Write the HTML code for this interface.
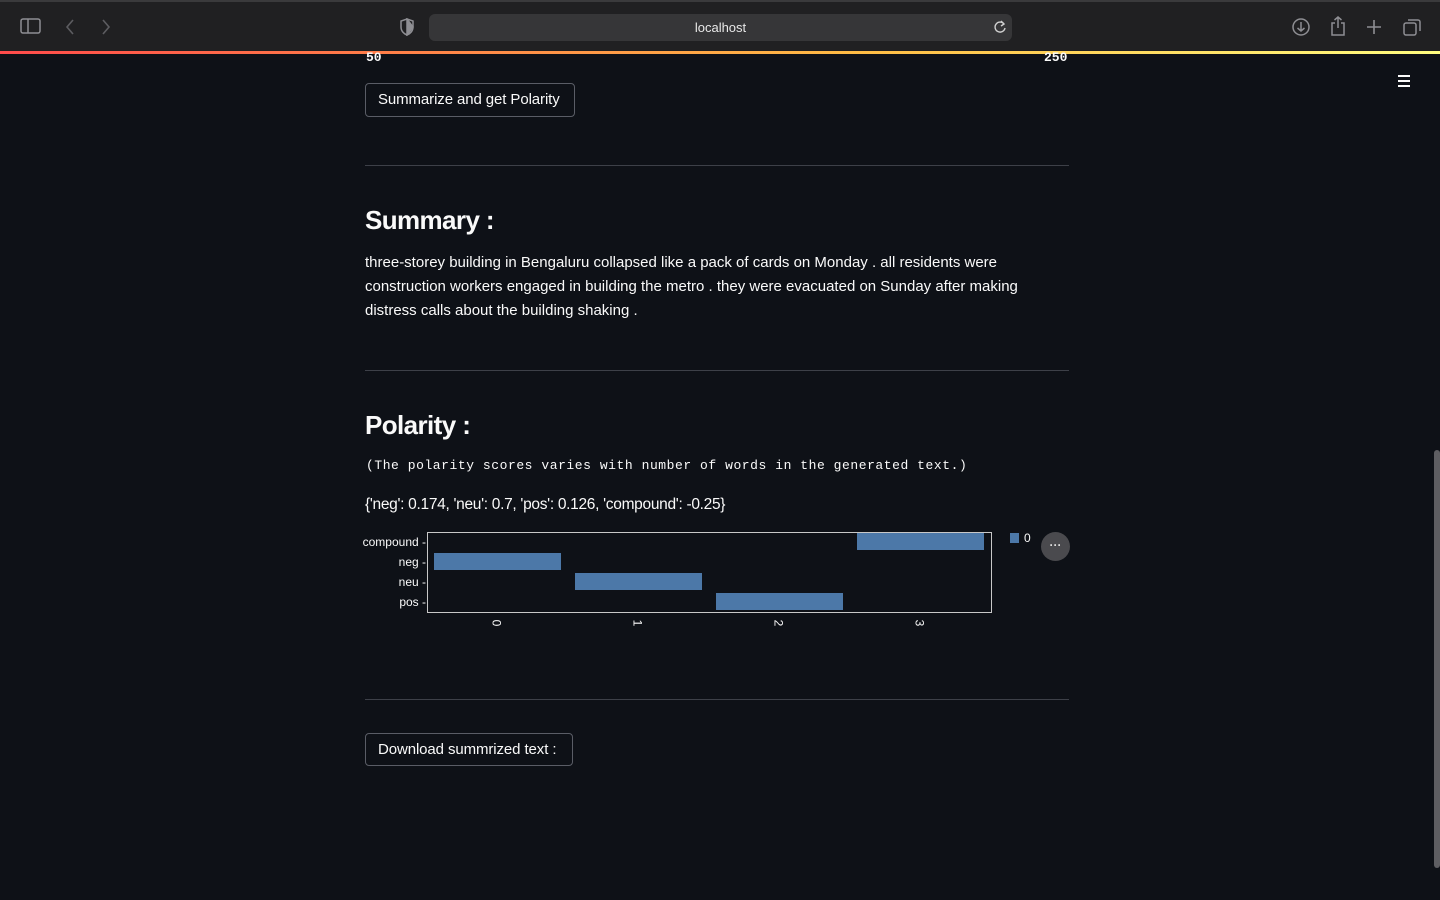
<!DOCTYPE html>
<html><head><meta charset="utf-8"><style>
*{margin:0;padding:0;box-sizing:border-box}
body{width:1440px;height:900px;background:#0e1117;color:#fafafa;font-family:"Liberation Sans",sans-serif;position:relative;overflow:hidden}
.tb{position:absolute;left:0;top:0;width:1440px;height:51px;background:#202022;border-top:2px solid #3a3a3c}
.grad{position:absolute;left:0;top:51px;width:1440px;height:3px;background:linear-gradient(90deg,#ff4b4b,#ffbd45 60%,#fffd80)}
.url{position:absolute;left:429px;top:12px;width:583px;height:27px;background:#363638;border-radius:6px;font-size:13px;text-align:center;line-height:27px;color:#e8e8e8}
.abs{position:absolute}
.btn{position:absolute;border:1px solid #5a5d66;border-radius:4px;font-size:15px;letter-spacing:-0.1px;line-height:32px;padding:0 12px;color:#fafafa;background:#0e1117}
hr{position:absolute;left:365px;width:704px;border:none;border-top:1px solid #3d4048}
h2{position:absolute;left:365px;font-size:26px;font-weight:bold;letter-spacing:-0.6px}
.p{position:absolute;left:365px;font-size:15px;letter-spacing:0px;line-height:24px;width:720px;white-space:nowrap}
.mono{position:absolute;left:366px;font-family:"Liberation Mono",monospace;font-size:13px;letter-spacing:0.55px}
.lab{position:absolute;font-size:12px;text-align:right;width:66px}
.bar{position:absolute;background:#4c78a8;height:17px}
</style></head><body>
<div class="tb">
<svg class="abs" style="left:20px;top:15px" width="22" height="18" viewBox="0 0 22 18" fill="none" stroke="#8e8e93" stroke-width="1.5"><rect x="1" y="2" width="19" height="14" rx="2"/><line x1="8" y1="2" x2="8" y2="16"/></svg>
<svg class="abs" style="left:64px;top:16px" width="12" height="18" fill="none" stroke="#5c5c60" stroke-width="1.6"><path d="M9 2 L3 9 L9 16"/></svg>
<svg class="abs" style="left:100px;top:16px" width="12" height="18" fill="none" stroke="#5c5c60" stroke-width="1.6"><path d="M3 2 L9 9 L3 16"/></svg>
<svg class="abs" style="left:399px;top:16px" width="16" height="18" fill="none" stroke="#8e8e93" stroke-width="1.5"><path d="M8 1 L14 3 V9 C14 13 11 16 8 17 C5 16 2 13 2 9 V3 Z"/><path d="M8 1 V17 L14 9 Z" fill="#8e8e93"/></svg>
<div class="url">localhost</div>
<svg class="abs" style="left:992px;top:17px" width="16" height="16" fill="none" stroke="#d0d0d0" stroke-width="1.4"><path d="M12 5 A5 5 0 1 0 13 9"/><path d="M9 2 L12 5 L9 7"/></svg>
<svg class="abs" style="left:1291px;top:15px" width="20" height="20" fill="none" stroke="#8e8e93" stroke-width="1.5"><circle cx="10" cy="10" r="8"/><path d="M10 5 V14 M6.5 11 L10 14 L13.5 11"/></svg>
<svg class="abs" style="left:1329px;top:13px" width="18" height="22" fill="none" stroke="#8e8e93" stroke-width="1.5"><path d="M6 8 H3 V20 H15 V8 H12 M9 2 V13 M5.5 5 L9 2 L12.5 5"/></svg>
<svg class="abs" style="left:1366px;top:17px" width="16" height="16" stroke="#8e8e93" stroke-width="1.6"><path d="M8 1 V15 M1 8 H15"/></svg>
<svg class="abs" style="left:1403px;top:16px" width="19" height="19" fill="none" stroke="#8e8e93" stroke-width="1.5"><rect x="1" y="5" width="12" height="12" rx="2"/><path d="M5 2 H15 A2 2 0 0 1 17 4 V13"/></svg>
</div>
<div class="grad"></div>
<div class="abs" style="left:366px;top:50px;font-family:'Liberation Mono',monospace;font-size:13px;font-weight:bold;color:#fafafa">50</div>
<div class="abs" style="left:1044px;top:50px;font-family:'Liberation Mono',monospace;font-size:13px;font-weight:bold;color:#fafafa">250</div>
<svg class="abs" style="left:1396px;top:73px" width="16" height="16" stroke="#fafafa" stroke-width="2"><path d="M2 3 H14 M2 8 H14 M2 13 H14"/></svg>
<div class="btn" style="left:365px;top:83px;height:34px;width:210px">Summarize and get Polarity</div>
<hr style="top:165px">
<h2 style="top:205px">Summary :</h2>
<div class="p" style="top:251px">three-storey building in Bengaluru collapsed like a pack of cards on Monday . all residents were<br>construction workers engaged in building the metro . they were evacuated on Sunday after making<br>distress calls about the building shaking .</div>
<hr style="top:370px">
<h2 style="top:410px">Polarity :</h2>
<div class="mono" style="top:458px">(The polarity scores varies with number of words in the generated text.)</div>
<div class="p" style="top:493px;font-size:15.5px;letter-spacing:-0.3px">{'neg': 0.174, 'neu': 0.7, 'pos': 0.126, 'compound': -0.25}</div>
<div class="abs" style="left:427px;top:532px;width:565px;height:81px;border:1px solid #c8c8c8"></div>
<div class="lab" style="left:360px;top:535px">compound -</div>
<div class="lab" style="left:360px;top:555px">neg -</div>
<div class="lab" style="left:360px;top:575px">neu -</div>
<div class="lab" style="left:360px;top:595px">pos -</div>
<div class="bar" style="left:857px;top:533px;width:127px"></div>
<div class="bar" style="left:434px;top:553px;width:127px"></div>
<div class="bar" style="left:575px;top:573px;width:127px"></div>
<div class="bar" style="left:716px;top:593px;width:127px"></div>
<div class="abs" style="left:493px;top:616px;font-size:12px;transform:rotate(90deg)">0</div>
<div class="abs" style="left:634px;top:616px;font-size:12px;transform:rotate(90deg)">1</div>
<div class="abs" style="left:775px;top:616px;font-size:12px;transform:rotate(90deg)">2</div>
<div class="abs" style="left:916px;top:616px;font-size:12px;transform:rotate(90deg)">3</div>
<div class="abs" style="left:1010px;top:533px;width:9px;height:10px;background:#4c78a8"></div>
<div class="abs" style="left:1024px;top:531px;font-size:12px">0</div>
<div class="abs" style="left:1041px;top:532px;width:29px;height:29px;border-radius:50%;background:#4a4a4e;color:#ddd;font-size:12px;text-align:center;line-height:26px;font-weight:bold">···</div>
<hr style="top:699px">
<div class="btn" style="left:365px;top:733px;height:33px;width:208px">Download summrized text :</div>
<div class="abs" style="left:1434px;top:450px;width:6px;height:418px;background:#5e5e62;border-radius:3px"></div>
</body></html>
